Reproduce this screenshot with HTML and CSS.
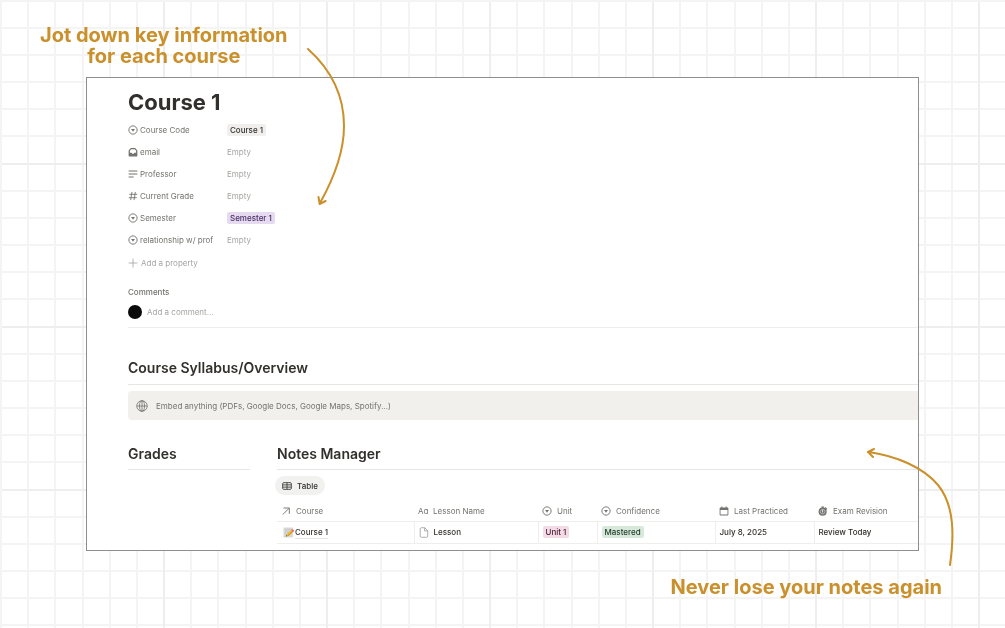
FILE: index.html
```html
<!DOCTYPE html>
<html lang="en">
<head>
<meta charset="utf-8">
<title>Course 1</title>
<link rel="stylesheet" href="styles.css">
</head>
<body>
<svg class="backdrop" aria-hidden="true">
  <defs>
    <pattern id="grid" x="0" y="0" width="163" height="163" patternUnits="userSpaceOnUse">
      <path d="M1 0V163M28 0V163M55 0V163M83 0V163M110 0V163M137 0V163M0 1H163M0 28H163M0 55H163M0 82H163M0 109H163M0 136H163" stroke="#f4f4f4" stroke-width="2"/>
    </pattern>
    <pattern id="seams" x="163" y="163" width="163" height="163" patternUnits="userSpaceOnUse">
      <path d="M1 0V163M0 1H163" stroke="#eeeeee" stroke-width="2"/>
    </pattern>
  </defs>
  <rect width="100%" height="100%" fill="url(#grid)"/>
  <rect x="2" y="2" width="100%" height="100%" fill="url(#seams)"/>
</svg>

<svg class="symbols" aria-hidden="true">
  <symbol id="i-select" viewBox="0 0 16 16"><circle cx="8" cy="8" r="6.6" fill="none" stroke="currentColor" stroke-width="1.5"/><path d="M4.9 6.4h6.2L8 10.6z" fill="currentColor"/></symbol>
  <symbol id="i-mail" viewBox="0 0 16 16"><path d="M1 5.4L4.6 1.6h6.8L15 5.4V14a1 1 0 0 1-1 1H2a1 1 0 0 1-1-1zM3 5.8v3.4h2.8c.3 1.2 1.100 1.800 2.200 1.800s1.900-.6 2.200-1.800H13V5.800l-2.200-2.300H5.200z" fill="currentColor" fill-rule="evenodd"/></symbol>
  <symbol id="i-text" viewBox="0 0 16 16"><path d="M1 3.2h14M1 8h14M1 12.8h8" stroke="currentColor" stroke-width="1.6"/></symbol>
  <symbol id="i-hash" viewBox="0 0 16 16"><path d="M6.400 1.500L4.200 14.500M11.800 1.500L9.600 14.500M2 5.300h12.800M1.200 10.700H14" stroke="currentColor" stroke-width="1.4"/></symbol>
  <symbol id="i-plus" viewBox="0 0 16 16"><path d="M8 1v14M1 8h14" stroke="currentColor" stroke-width="1.3"/></symbol>
  <symbol id="i-globe" viewBox="0 0 24 24"><g fill="none" stroke="currentColor" stroke-width="1.6"><circle cx="12" cy="12" r="10.500"/><ellipse cx="12" cy="12" rx="5" ry="10.500"/><path d="M12 1.500v21M1.500 12h21"/></g></symbol>
  <symbol id="i-table" viewBox="0 0 18 16"><g fill="none" stroke="currentColor" stroke-width="1.500"><rect x="1.200" y="2" width="15.600" height="12" rx="2"/><path d="M1.200 6h15.600M1.200 10h15.600M9 2v12"/></g></symbol>
  <symbol id="i-arrow" viewBox="0 0 16 16"><path d="M3 13.500L13 3.500M4 3.200h9.300v9.300" fill="none" stroke="currentColor" stroke-width="1.500"/></symbol>
  <symbol id="i-calendar" viewBox="0 0 16 16"><path d="M2.400 2.200h1.400V.8h1.600v1.400h5.200V.8h1.600v1.400h1.400c.8 0 1.400.6 1.400 1.400v10c0 .8-.6 1.400-1.400 1.400H2.400c-.8 0-1.400-.6-1.400-1.400v-10c0-.8.6-1.400 1.400-1.400zm0 4v7.200h11.200V6.200z" fill="currentColor" fill-rule="evenodd"/></symbol>
  <symbol id="i-timer" viewBox="0 0 16 16"><circle cx="7.400" cy="9" r="6.500" fill="currentColor"/><path d="M5.300.8h4.400v2H5.300zM11.800 1.600l3.200 3-1.400 1.400-3-3z" fill="currentColor"/><circle cx="7.400" cy="9" r="3.700" fill="none" stroke="#fff" stroke-width=".7"/><path d="M7.400 6v4.400" stroke="#fff" stroke-width="1.300"/></symbol>
  <symbol id="i-page" viewBox="0 0 16 18"><path d="M3.600 1.200h5.600l4.900 4.900v8.900c0 1-.8 1.800-1.800 1.800H3.600c-1 0-1.800-.8-1.800-1.800V3c0-1 .8-1.800 1.800-1.800zM9 1.400v5h5" fill="none" stroke="currentColor" stroke-width="1.300"/></symbol>
  <symbol id="i-memo" viewBox="0 0 22 22"><path d="M1 1h19v20H1z" fill="#dadada"/><path d="M3 4.500h14M3 8h12M3 11.500h9M3 15h5M3 18.500h5" stroke="#b9bcc0" stroke-width="1.100"/><path d="M6 19l2-5L17.500 5l3.600 3.600L11 18z" fill="#f2bc2d"/><path d="M9.600 16.400L19.200 6.800l1.900 1.800L11 18z" fill="#d7931c"/><path d="M16.200 6.200L18 4.400c1-.9 4.600 2.400 3.700 3.500l-1.800 1.900z" fill="#ea7180"/><path d="M6 19l1.100-2.800 1.800 1.700z" fill="#42382e"/></symbol>
</svg>

<main class="stage">
  <p class="note note-top">Jot down key information<br>for each course</p>

  <article class="card">
    <h1 class="title">Course 1</h1>
    <dl class="props">
      <div class="prop"><dt><svg class="icon"><use href="#i-select"/></svg>Course Code</dt><dd><span class="tag gray">Course 1</span></dd></div>
      <div class="prop"><dt><svg class="icon"><use href="#i-mail"/></svg>email</dt><dd>Empty</dd></div>
      <div class="prop"><dt><svg class="icon"><use href="#i-text"/></svg>Professor</dt><dd>Empty</dd></div>
      <div class="prop"><dt><svg class="icon"><use href="#i-hash"/></svg>Current Grade</dt><dd>Empty</dd></div>
      <div class="prop"><dt><svg class="icon"><use href="#i-select"/></svg>Semester</dt><dd><span class="tag purple">Semester 1</span></dd></div>
      <div class="prop"><dt><svg class="icon"><use href="#i-select"/></svg>relationship w/ prof</dt><dd>Empty</dd></div>
    </dl>
    <button class="add" type="button"><svg class="icon"><use href="#i-plus"/></svg>Add a property</button>

    <section class="comments">
      <label class="comments-label" for="comment">Comments</label>
      <div class="comment-row"><span class="avatar"></span><input id="comment" class="comment-input" type="text" placeholder="Add a comment..."></div>
    </section>

    <h2 class="heading">Course Syllabus/Overview</h2>
    <button class="embed" type="button"><svg class="globe"><use href="#i-globe"/></svg>Embed anything (PDFs, Google Docs, Google Maps, Spotify...)</button>

    <div class="columns">
      <section><h2 class="heading">Grades</h2></section>
      <section>
        <h2 class="heading">Notes Manager</h2>
        <button class="view" type="button"><svg class="icon"><use href="#i-table"/></svg>Table</button>
        <table class="notes">
          <colgroup><col class="c-course"><col class="c-lesson"><col class="c-unit"><col class="c-confidence"><col class="c-date"><col></colgroup>
          <thead>
            <tr>
              <th><span class="cell"><svg class="icon"><use href="#i-arrow"/></svg>Course</span></th>
              <th><span class="cell"><span class="aa">Aɑ</span>Lesson Name</span></th>
              <th><span class="cell"><svg class="icon"><use href="#i-select"/></svg>Unit</span></th>
              <th><span class="cell"><svg class="icon"><use href="#i-select"/></svg>Confidence</span></th>
              <th><span class="cell"><svg class="icon"><use href="#i-calendar"/></svg>Last Practiced</span></th>
              <th><span class="cell"><svg class="icon"><use href="#i-timer"/></svg>Exam Revision</span></th>
            </tr>
          </thead>
          <tbody>
            <tr>
              <td><span class="cell relation"><svg class="memo"><use href="#i-memo"/></svg><a class="link" href="#">Course 1</a></span></td>
              <td><span class="cell lesson"><svg class="doc"><use href="#i-page"/></svg>Lesson</span></td>
              <td><span class="tag pink">Unit 1</span></td>
              <td><span class="tag green">Mastered</span></td>
              <td>July 8, 2025</td>
              <td>Review Today</td>
            </tr>
          </tbody>
        </table>
      </section>
    </div>
  </article>

  <p class="note note-bottom">Never lose your notes again</p>

  <svg class="arrow arrow-top" viewBox="0 0 50 170" aria-hidden="true"><path d="M8 9C28 27 44 53 44 86C44 112 34 138 20 163M18.500 157L19.700 164L25.600 161"/></svg>
  <svg class="arrow arrow-bottom" viewBox="0 0 100 130" aria-hidden="true"><path d="M90 125C94 97 95 66 78 45C63 27 36 16 9 12M14 9L8 12L13 17"/></svg>
</main>
</body>
</html>
```
FILE: styles.css
```css
* { box-sizing: border-box; }

body {
  margin: 0;
  background: #fff;
  color: #32302c;
  font-family: Inter, "Liberation Sans", sans-serif;
  font-size: 8px;
  line-height: 12px;
}

button, input {
  border: 0;
  padding: 0;
  background: none;
  color: inherit;
  font: inherit;
}

.backdrop {
  position: fixed;
  inset: 0;
  z-index: -1;
  width: 100%;
  height: 100%;
}

.symbols { display: none; }

.stage {
  position: relative;
  padding: 25px 86px 24px;
}

.note {
  width: fit-content;
  margin: 0;
  color: #ca902b;
  font-size: 20px;
  font-weight: 700;
  line-height: 21px;
  text-align: center;
  white-space: nowrap;
}

.note-top { margin: 0 0 10px -46px; }
.note-bottom { margin: 26px -23px 0 auto; }

.card {
  padding: 10px 0 6px 41px;
  border: 1px solid #8e8e8e;
  background: #fff;
}

.title {
  margin: 0 0 3px;
  font-size: 22px;
  font-weight: 700;
  line-height: 28px;
}

.icon {
  flex: none;
  width: 10px;
  height: 10px;
}

.props { margin: 0 0 1px; }

.prop {
  display: flex;
  align-items: center;
  height: 22px;
}

.prop dt {
  display: flex;
  align-items: center;
  gap: 2px;
  width: 99px;
  color: #73726e;
}

.prop dd { margin: 0; color: #a5a4a1; }

.tag {
  display: inline-block;
  padding: 0 3px;
  border-radius: 2px;
  color: #32302c;
  font-weight: 500;
}

.gray { background: #f0efed; }
.purple { background: #e5daef; color: #492f64; }
.pink { background: #f3dbe6; color: #4c2337; }
.green { background: #d8e9db; color: #1c3829; }

.add {
  display: flex;
  align-items: center;
  gap: 3px;
  height: 22px;
  color: #a5a4a1;
}

.comments {
  padding: 12px 0 8px;
  border-bottom: 1px solid #ededec;
}

.comments-label {
  display: block;
  color: #73726e;
  font-weight: 500;
}

.comment-row {
  display: flex;
  align-items: center;
  gap: 5px;
  margin-top: 7px;
}

.avatar {
  width: 14px;
  height: 14px;
  border-radius: 50%;
  background: #0b0b0b;
}

.comment-input { flex: 1; height: 14px; outline: none; }
.comment-input::placeholder { color: #a5a4a1; }

.heading {
  margin: 0;
  padding-bottom: 6px;
  border-bottom: 1px solid #e6e6e4;
  font-size: 14px;
  font-weight: 600;
  line-height: 20px;
}

.comments + .heading { margin-top: 30px; }

.embed {
  display: flex;
  align-items: center;
  gap: 8px;
  width: 100%;
  height: 29px;
  margin: 6px 0 24px;
  padding-left: 8px;
  border-radius: 4px 0 0 4px;
  background: #f1f0ed;
  color: #73726e;
}

.globe { width: 12px; height: 12px; }

.columns {
  display: grid;
  grid-template-columns: 122px minmax(0, 1fr);
  gap: 27px;
}

.columns .heading { padding-bottom: 5px; }

.view {
  display: flex;
  align-items: center;
  gap: 5px;
  height: 19px;
  margin: 6px 0 6px -2px;
  padding: 0 7px;
  border-radius: 10px;
  background: #f1f1f0;
  font-weight: 500;
}

.notes {
  width: 100%;
  border-collapse: collapse;
  table-layout: fixed;
}

.c-course { width: 137px; }
.c-lesson { width: 124px; }
.c-unit { width: 59px; }
.c-confidence { width: 118px; }
.c-date { width: 99px; }

.notes th, .notes td {
  padding: 0 4px;
  border-bottom: 1px solid #eeeeed;
  text-align: left;
  white-space: nowrap;
}

.notes th { height: 20px; color: #73726e; font-weight: 400; }
.notes td { height: 22px; font-weight: 500; }
.notes td + td { border-left: 1px solid #eeeeed; }

.cell {
  display: flex;
  align-items: center;
  gap: 5px;
}

.aa { width: 10px; }
.relation { gap: 1px; padding-left: 2px; }
.memo { width: 11px; height: 11px; }
.doc { width: 10px; height: 11px; color: #9a9996; }
.link { color: inherit; text-decoration: none; border-bottom: 1px solid #e6e6e4; }

.arrow {
  position: absolute;
  fill: none;
  stroke: #ca902b;
  stroke-width: 2;
  stroke-linecap: round;
  stroke-linejoin: round;
}

.arrow-top { left: 300px; top: 40px; width: 50px; height: 170px; }
.arrow-bottom { right: 45px; top: 440px; width: 100px; height: 130px; }
```
